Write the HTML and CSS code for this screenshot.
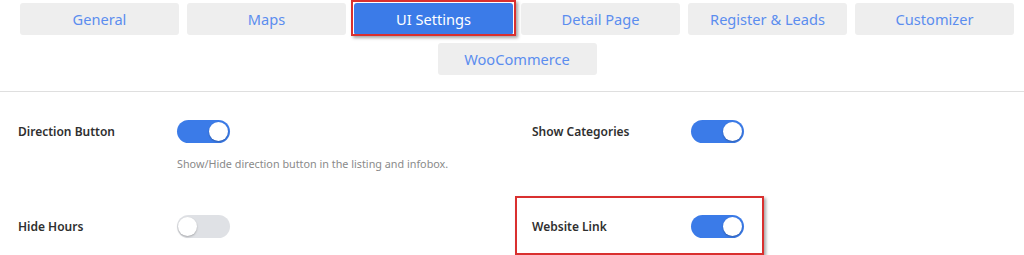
FILE: index.html
```html
<!DOCTYPE html>
<html lang="en">
<head>
  <meta charset="UTF-8">
  <meta name="viewport" content="width=device-width, initial-scale=1.0">
  <title>UI Settings</title>
  <link rel="stylesheet" href="styles.css">
</head>
<body>
  <div class="tabs">
    <button class="tab">General</button>
    <button class="tab">Maps</button>
    <button class="tab active marked">UI Settings</button>
    <button class="tab">Detail Page</button>
    <button class="tab">Register &amp; Leads</button>
    <button class="tab">Customizer</button>
    <button class="tab">WooCommerce</button>
  </div>

  <hr class="divider">

  <div class="settings">
    <div class="setting">
      <span class="label">Direction Button</span>
      <div class="control">
        <span class="toggle on"></span>
        <p class="hint">Show/Hide direction button in the listing and infobox.</p>
      </div>
    </div>
    <div class="setting">
      <span class="label">Show Categories</span>
      <div class="control">
        <span class="toggle on"></span>
      </div>
    </div>
    <div class="setting">
      <span class="label">Hide Hours</span>
      <div class="control">
        <span class="toggle"></span>
      </div>
    </div>
    <div class="setting marked-row">
      <span class="label">Website Link</span>
      <div class="control">
        <span class="toggle on"></span>
      </div>
    </div>
  </div>
</body>
</html>
```

FILE: styles.css
```css
body {
  margin: 0;
  padding-bottom: 17px;
  font-family: 'Noto Sans', 'Open Sans', sans-serif;
  background: #fff;
  color: #333;
}
.tabs {
  display: flex;
  flex-wrap: wrap;
  justify-content: center;
  gap: 8px 8px;
  width: 994px;
  margin: 0 0 0 20px;
  padding-top: 3px;
}
.tab {
  position: relative;
  width: 159px;
  height: 32px;
  border: none;
  border-radius: 3px;
  background-color: #eeeeee;
  color: #5b8def;
  font-family: inherit;
  font-size: 14.6px;
  padding: 0;
  cursor: pointer;
}
.tab.active {
  background-color: #3b7be8;
  color: #fff;
}
/* red annotation boxes */
.marked::after,
.marked-row::after {
  content: '';
  position: absolute;
  border: 2px solid #d9302f;
  box-shadow: 2px 2px 3px rgba(0, 0, 0, 0.35);
  pointer-events: none;
}
.marked::after {
  top: -3px;
  left: -3px;
  right: -3px;
  bottom: -1px;
}
.divider {
  border: none;
  border-top: 1px solid #dfdfdf;
  margin: 16px 0 0;
}
.settings {
  display: grid;
  grid-template-columns: 514px 514px;
  row-gap: 44px;
  margin: 28px 0 0 18px;
}
.setting {
  display: grid;
  grid-template-columns: 159px auto;
  align-items: start;
}
.marked-row {
  position: relative;
  width: 213px;
}
.marked-row::after {
  top: -19px;
  left: -17px;
  right: -19px;
  bottom: -17px;
}
.label {
  font-size: 12px;
  font-weight: 600;
  color: #2f2f2f;
  line-height: 23px;
}
.control {
  display: flex;
  flex-direction: column;
}
.toggle {
  position: relative;
  display: block;
  width: 53px;
  height: 23px;
  border-radius: 12px;
  background-color: #dfe1e5;
}
.toggle::before {
  content: '';
  position: absolute;
  top: 2px;
  left: 1px;
  width: 19px;
  height: 19px;
  border-radius: 50%;
  background: #fff;
  box-shadow: 0 1px 2px rgba(0, 0, 0, 0.25);
}
.toggle.on {
  background-color: #3b7be8;
}
.toggle.on::before {
  left: auto;
  right: 2px;
}
.hint {
  margin: 13px 0 0;
  font-size: 10.8px;
  color: #8a8a8a;
  white-space: nowrap;
}
```
